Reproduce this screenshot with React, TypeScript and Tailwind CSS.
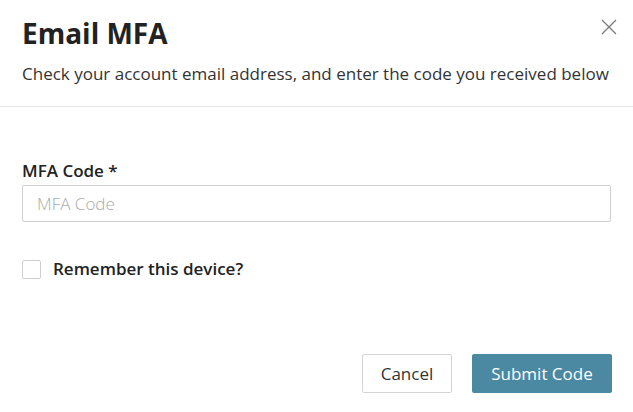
import React, { useState } from "react";

const font = { fontFamily: '"Open Sans", "Noto Sans", sans-serif' };

function CloseIcon() {
  return (
    <svg width="16" height="16" viewBox="0 0 16 16" className="text-[#7a7a7a]">
      <path d="M1 1 L15 15 M15 1 L1 15" stroke="currentColor" strokeWidth="1.3" fill="none" />
    </svg>
  );
}

export default function App() {
  const [remember, setRemember] = useState(false);

  return (
    <div className="w-[633px] h-[412px] bg-white text-[#222] overflow-hidden" style={font}>
      {/* header */}
      <div className="flex flex-col border-b border-[#e6e6e6] px-[22px] pt-[14px] pb-[20px]">
        <div className="flex items-start justify-between">
          <h2 className="text-[28px] font-bold leading-[38px] text-[#222]">Email MFA</h2>
          <button className="mt-[5px] mr-[-6px]">
            <CloseIcon />
          </button>
        </div>
        <p className="mt-[10px] text-[17px] leading-[24px] text-[#333]">
          Check your account email address, and enter the code you received below
        </p>
      </div>

      {/* body */}
      <div className="flex flex-col px-[22px] pt-[52px]">
        <label className="text-[17px] font-semibold leading-[24px] text-[#222]">MFA Code *</label>
        <input
          placeholder="MFA Code"
          className="mt-[2px] h-[37px] w-full rounded-[2px] border border-[#cfcfcf] px-[14px] text-[17px] font-light text-[#333] placeholder:text-[#ababab] outline-none"
        />
        <label className="mt-[35px] flex items-center gap-[12px] cursor-pointer">
          <span
            onClick={() => setRemember(!remember)}
            className="h-[19px] w-[19px] rounded-[2px] border border-[#cfcfcf] bg-white"
          />
          <span className="text-[17px] font-semibold leading-[24px] text-[#222]">Remember this device?</span>
        </label>
      </div>

      {/* footer */}
      <div className="flex justify-end gap-[20px] px-[21px] pt-[73px]">
        <button className="h-[39px] w-[90px] rounded-[2px] border border-[#d4d4d4] bg-white text-[17px] text-[#333]">
          Cancel
        </button>
        <button className="h-[39px] w-[140px] rounded-[2px] bg-[#4b88a2] text-[17px] text-white">
          Submit Code
        </button>
      </div>
    </div>
  );
}
